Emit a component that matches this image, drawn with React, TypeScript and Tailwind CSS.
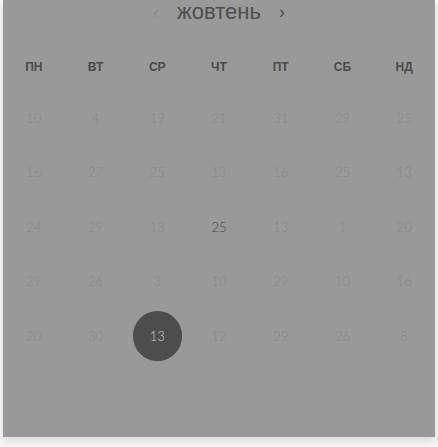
const weekdays = ["ПН", "ВТ", "СР", "ЧТ", "ПТ", "СБ", "НД"];

const weeks = [
  [10, 4, 19, 21, 31, 29, 25],
  [16, 27, 25, 13, 16, 25, 13],
  [24, 29, 13, 25, 13, 1, 20],
  [29, 26, 3, 10, 29, 10, 16],
  [20, 30, 13, 12, 29, 26, 8],
];

export default function App() {
  return (
    <div className="h-[447px] w-[438px] overflow-hidden bg-[#f7f7f7] pl-[3px]">
      <div className="h-[437px] w-[432px] bg-[#999999] shadow-[0_4px_8px_rgba(0,0,0,0.12)]">
        <div className="flex h-[24px] items-center justify-center gap-[18px] font-['Liberation_Sans',sans-serif]">
          <span className="text-[18px] text-[#8a8a8a]">‹</span>
          <span className="text-[22px] leading-none text-[#4e4e4e]">жовтень</span>
          <span className="text-[18px] text-[#4e4e4e]">›</span>
        </div>

        <div className="mt-[33px] grid h-[20px] grid-cols-7 items-center font-['Liberation_Sans',sans-serif] text-[12px] font-bold text-[#4a4a4a]">
          {weekdays.map((d) => (
            <div key={d} className="text-center">
              {d}
            </div>
          ))}
        </div>

        <div className="mt-[14px] font-['Lato',sans-serif] text-[13px] font-light">
          {weeks.map((week, r) => (
            <div key={r} className="grid h-[54.5px] grid-cols-7 items-center">
              {week.map((n, c) => {
                const selected = r === 4 && c === 2;
                const current = r === 2 && c === 3;
                return (
                  <div key={c} className="flex justify-center">
                    {selected ? (
                      <span className="flex h-[50px] w-[49px] items-center justify-center rounded-full bg-[#4d4d4d] text-[#d0d0d0]">
                        {n}
                      </span>
                    ) : (
                      <span className={current ? "text-[#444444]" : "text-[#888888]"}>{n}</span>
                    )}
                  </div>
                );
              })}
            </div>
          ))}
        </div>
      </div>
    </div>
  );
}
